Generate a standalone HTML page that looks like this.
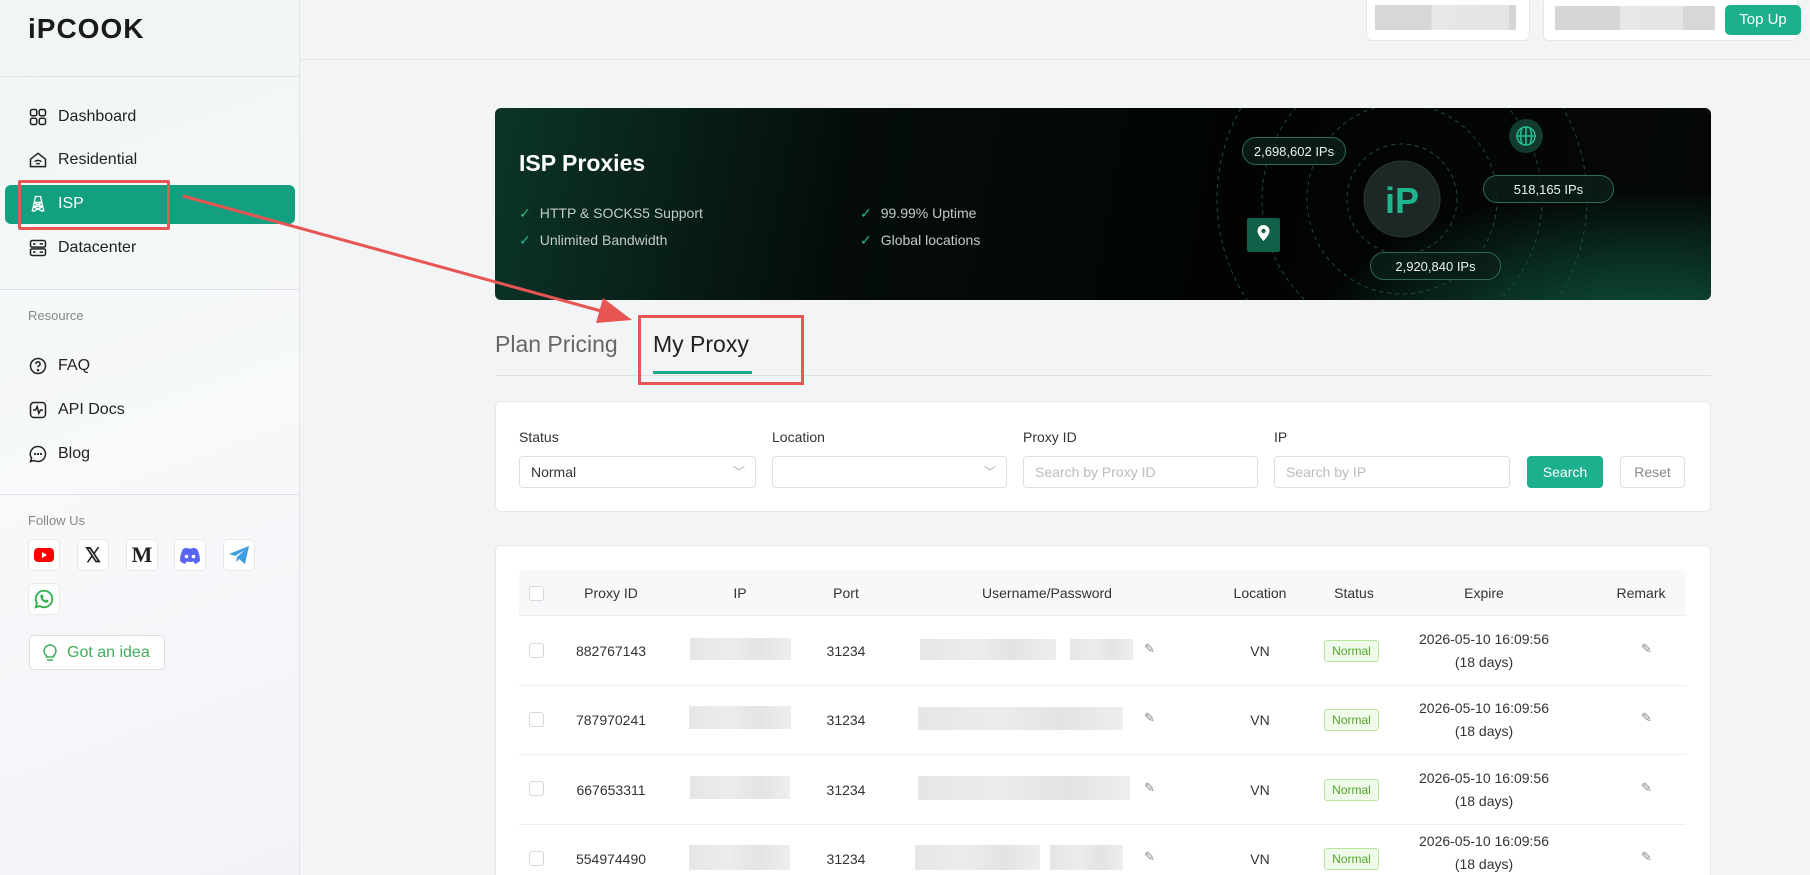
<!DOCTYPE html>
<html style="overflow:hidden;width:1810px;height:875px"><head><meta charset="utf-8"><style>
*{box-sizing:border-box;margin:0;padding:0}
body{width:1810px;height:875px;overflow:hidden;background:#f3f4f6;font-family:"Liberation Sans",sans-serif;color:#222;position:relative}
.abs{position:absolute}
.side{left:0;top:0;width:300px;height:875px;background:linear-gradient(160deg,#f0f6f4,#f7f9fa 50%,#f1f3f8);border-right:1px solid #e3e5e8}
.hr{position:absolute;left:0;width:300px;height:1px;background:#dfe2e6}
.nav{position:absolute;left:28px;font-size:16px;color:#222;display:flex;align-items:center;gap:10px}
.nav svg{width:20px;height:20px}
.soc{position:absolute;width:32px;height:32px;background:#fff;border:1px solid #e6e8ea;border-radius:5px;display:flex;align-items:center;justify-content:center}
.card{background:#fff;border:1px solid #e5e7ea;border-radius:6px}
.lbl{position:absolute;top:429px;font-size:14px;color:#333}
.inp{position:absolute;top:456px;height:32px;border:1px solid #dcdfe3;border-radius:4px;background:#fff;font-size:14px;padding:0 11px;line-height:30px;color:#bbb}
.th{position:absolute;top:585px;font-size:14px;color:#333;transform:translateX(-50%);white-space:nowrap}
.td{position:absolute;font-size:14px;color:#333;transform:translate(-50%,-50%);white-space:nowrap;text-align:center}
.blur{position:absolute;background:linear-gradient(90deg,#e6e6e6,#ececec 40%,#e3e3e3 70%,#eee)}
.cb{position:absolute;width:15px;height:15px;border:1px solid #d5d8dc;border-radius:3px;background:#fff;left:529px}
.badge{position:absolute;left:1324px;width:55px;height:22px;border:1px solid #b7e49a;background:#f0faea;color:#52a52a;font-size:12px;text-align:center;line-height:20px;border-radius:3px}
.rowline{position:absolute;left:519px;width:1167px;height:1px;background:#ebedf0}
.pill{position:absolute;border:1px solid #2e6a55;background:rgba(10,30,24,.85);border-radius:14px;color:#e8f3ef;font-size:13px;display:flex;align-items:center;justify-content:center}
.feat{position:absolute;color:#c4ccca;font-size:14px}
.feat b{color:#2ab48e;margin-right:9px;font-weight:normal}
.pen{position:absolute;color:#888;font-size:13px}
</style></head><body>

<div class="abs side">
  <div class="abs" style="left:28px;top:13px;font-size:28px;font-weight:bold;letter-spacing:1px;color:#1b1b1b">iPCOOK</div>
  <div class="hr" style="top:76px"></div>
  <div class="nav" style="top:107px"><svg viewBox="0 0 24 24" fill="none" stroke="#222" stroke-width="1.8"><rect x="3" y="3" width="7.5" height="7.5" rx="2"/><rect x="13.5" y="3" width="7.5" height="7.5" rx="2"/><rect x="3" y="13.5" width="7.5" height="7.5" rx="2"/><rect x="13.5" y="13.5" width="7.5" height="7.5" rx="2"/></svg>Dashboard</div>
  <div class="nav" style="top:150px"><svg viewBox="0 0 24 24" fill="none" stroke="#222" stroke-width="1.8"><path d="M3 11l9-7 9 7v9H3z"/><path d="M8 14a6 6 0 0 1 8 0M10 17a3 3 0 0 1 4 0"/></svg>Residential</div>
  <div class="abs" style="left:5px;top:185px;width:290px;height:39px;background:#12a080;border-radius:6px"></div>
  <div class="nav" style="top:194px;color:#fff"><svg viewBox="0 0 24 24" fill="none" stroke="#fff" stroke-width="1.6"><path d="M8 3h8M9 3l-4 18M15 3l4 18M7 10h10M6 15h12M7 10l10 5M17 10L7 15M6 15l12 6M18 15L6 21"/></svg>ISP</div>
  <div class="abs" style="left:18px;top:180px;width:152px;height:50px;border:3px solid #e85555;border-radius:2px"></div>
  <div class="nav" style="top:238px"><svg viewBox="0 0 24 24" fill="none" stroke="#222" stroke-width="1.8"><rect x="3" y="3" width="18" height="8" rx="2"/><rect x="3" y="13" width="18" height="8" rx="2"/><path d="M6 7h3M6 17h3M14 7h4M14 17h4"/></svg>Datacenter</div>
  <div class="hr" style="top:289px"></div>
  <div class="abs" style="left:28px;top:308px;font-size:13px;color:#888">Resource</div>
  <div class="nav" style="top:356px"><svg viewBox="0 0 24 24" fill="none" stroke="#222" stroke-width="1.8"><circle cx="12" cy="12" r="9"/><path d="M9.5 9.5a2.5 2.5 0 1 1 3.5 2.3c-.7.3-1 .9-1 1.7"/><circle cx="12" cy="17" r=".6" fill="#222"/></svg>FAQ</div>
  <div class="nav" style="top:400px"><svg viewBox="0 0 24 24" fill="none" stroke="#222" stroke-width="1.8"><rect x="3" y="3" width="18" height="18" rx="4"/><path d="M6 12h3l2-4 2 8 2-4h3"/></svg>API Docs</div>
  <div class="nav" style="top:444px"><svg viewBox="0 0 24 24" fill="none" stroke="#222" stroke-width="1.8"><path d="M12 3a9 9 0 1 1-4.5 16.8L3 21l1.3-4A9 9 0 0 1 12 3z"/><circle cx="8.5" cy="12" r=".5" fill="#222"/><circle cx="12" cy="12" r=".5" fill="#222"/><circle cx="15.5" cy="12" r=".5" fill="#222"/></svg>Blog</div>
  <div class="hr" style="top:494px"></div>
  <div class="abs" style="left:28px;top:513px;font-size:13px;color:#888">Follow Us</div>
  <div class="soc" style="left:28px;top:539px"><svg width="20" height="14" viewBox="0 0 20 14"><rect width="20" height="14" rx="4" fill="#f00"/><path d="M8 4l5 3-5 3z" fill="#fff"/></svg></div>
  <div class="soc" style="left:77px;top:539px;font-size:20px;font-weight:bold;font-family:'Liberation Serif',serif">𝕏</div>
  <div class="soc" style="left:126px;top:539px;font-size:22px;font-weight:bold;font-family:'Liberation Serif',serif">M</div>
  <div class="soc" style="left:174px;top:539px"><svg width="22" height="17" viewBox="0 0 22 17"><path d="M4 2Q8 0 9 1.5h4Q14 0 18 2q3 5 3 12-2 2-5 3l-1.5-2.5Q12 15 11 15t-3.5-.5L6 17q-3-1-5-3 0-7 3-12z" fill="#5865f2"/><circle cx="7.5" cy="9.5" r="1.8" fill="#fff"/><circle cx="14.5" cy="9.5" r="1.8" fill="#fff"/></svg></div>
  <div class="soc" style="left:223px;top:539px"><svg width="22" height="20" viewBox="0 0 22 20"><path d="M1 9L21 1l-4 18-6-5-3 3 1-5 8-7-10 6z" fill="#3d9ee0"/></svg></div>
  <div class="soc" style="left:28px;top:583px"><svg width="22" height="22" viewBox="0 0 24 24" fill="none" stroke="#2fb04b" stroke-width="2"><path d="M12 3a9 9 0 1 1-4.6 16.7L3 21l1.3-4.3A9 9 0 0 1 12 3z"/><path d="M8.5 8.5c0 4 3 7 7 7l1-1.5-2-1-1 1c-1.5-.5-3-2-3.5-3.5l1-1-1-2z" fill="#2fb04b" stroke-width="1"/></svg></div>
  <div class="abs" style="left:29px;top:635px;width:136px;height:35px;border:1px solid #dcdfe2;border-radius:5px;background:#fff;color:#3fad5c;font-size:16px;display:flex;align-items:center;padding-left:12px;gap:9px"><svg width="16" height="18" viewBox="0 0 16 18" fill="none" stroke="#3fad5c" stroke-width="1.6"><path d="M8 1a6 6 0 0 1 3.5 10.8V13h-7v-1.2A6 6 0 0 1 8 1zM5 16h6"/></svg>Got an idea</div>
</div>

<div class="abs" style="left:300px;top:59px;width:1510px;height:1px;background:#e2e4e7"></div>
<div class="abs card" style="left:1366px;top:-4px;width:164px;height:45px;border-radius:6px"></div>
<div class="blur" style="left:1375px;top:5px;width:141px;height:25px;background:linear-gradient(90deg,#d6d8d8 40%,#e6e8e6 40%,#e4e6e4 95%,#d4d6d6 95%)"></div>
<div class="abs card" style="left:1543px;top:-4px;width:255px;height:45px"></div>
<div class="blur" style="left:1555px;top:6px;width:160px;height:24px;background:linear-gradient(90deg,#d4d6d6 40%,#e6e8e6 41%,#e4e6e4 80%,#d6d8d8 80%)"></div>
<div class="abs" style="left:1725px;top:5px;width:76px;height:30px;background:#1cb08e;border-radius:5px;color:#fff;font-size:15px;text-align:center;line-height:30px">Top Up</div>

<div class="abs" style="left:495px;top:108px;width:1216px;height:192px;border-radius:6px;overflow:hidden;background:radial-gradient(ellipse 420px 200px at 1150px 240px,#0f5a43 0%,#0a2e24 45%,transparent 80%),linear-gradient(100deg,#0c3528 0%,#050d0b 28%,#020404 60%,#050807 100%)">
  <svg class="abs" style="left:0;top:0" width="1216" height="192">
    <g fill="none" stroke="#1f4a3c" stroke-dasharray="4 4">
      <circle cx="907" cy="91" r="55"/><circle cx="907" cy="91" r="95"/><circle cx="907" cy="91" r="140"/><circle cx="907" cy="91" r="185"/>
    </g>
    <circle cx="907" cy="91" r="38" fill="#1d2826" stroke="#2a3a35"/>
    <text x="890" y="105" font-family="Liberation Sans" font-weight="bold" font-size="36" fill="#1fb58e">iP</text>
    <circle cx="1031" cy="28" r="17" fill="#123a2e"/>
    <g fill="none" stroke="#28c193" stroke-width="1.5"><circle cx="1031" cy="28" r="9"/><path d="M1022 28h18M1031 19v18M1027 20q-3 8 0 16M1035 20q3 8 0 16"/></g>
    <rect x="752" y="110" width="33" height="34" rx="2" fill="#11604a"/>
    <path d="M768.5 117a6 6 0 0 1 6 6c0 4-6 10-6 10s-6-6-6-10a6 6 0 0 1 6-6z" fill="#fff"/><circle cx="768.5" cy="123" r="2.2" fill="#11604a"/>
  </svg>
  <div class="abs" style="left:24px;top:42px;color:#fff;font-size:23px;font-weight:bold">ISP Proxies</div>
  <div class="feat" style="left:24px;top:97px"><b>✓</b>HTTP &amp; SOCKS5 Support</div>
  <div class="feat" style="left:24px;top:124px"><b>✓</b>Unlimited Bandwidth</div>
  <div class="feat" style="left:365px;top:97px"><b>✓</b>99.99% Uptime</div>
  <div class="feat" style="left:365px;top:124px"><b>✓</b>Global locations</div>
  <div class="pill" style="left:747px;top:29px;width:104px;height:28px">2,698,602 IPs</div>
  <div class="pill" style="left:988px;top:67px;width:131px;height:28px">518,165 IPs</div>
  <div class="pill" style="left:875px;top:144px;width:131px;height:28px">2,920,840 IPs</div>
</div>

<div class="abs" style="left:495px;top:331px;font-size:23px;color:#666">Plan Pricing</div>
<div class="abs" style="left:653px;top:331px;font-size:23px;color:#222">My Proxy</div>
<div class="abs" style="left:653px;top:371px;width:99px;height:3px;background:#1ea888"></div>
<div class="abs" style="left:495px;top:375px;width:1216px;height:1px;background:#dcdfe2"></div>
<div class="abs" style="left:638px;top:315px;width:166px;height:70px;border:3px solid #e85555"></div>

<div class="abs card" style="left:495px;top:401px;width:1216px;height:111px"></div>
<div class="lbl" style="left:519px">Status</div>
<div class="lbl" style="left:772px">Location</div>
<div class="lbl" style="left:1023px">Proxy ID</div>
<div class="lbl" style="left:1274px">IP</div>
<div class="inp" style="left:519px;width:237px;color:#333">Normal<span style="position:absolute;right:10px;color:#aaa;font-size:12px">﹀</span></div>
<div class="inp" style="left:772px;width:235px"><span style="position:absolute;right:10px;color:#aaa;font-size:12px">﹀</span></div>
<div class="inp" style="left:1023px;width:235px">Search by Proxy ID</div>
<div class="inp" style="left:1274px;width:236px">Search by IP</div>
<div class="abs" style="left:1527px;top:456px;width:76px;height:32px;background:#1cb08e;border-radius:4px;color:#fff;font-size:14px;text-align:center;line-height:32px">Search</div>
<div class="abs" style="left:1620px;top:456px;width:65px;height:32px;border:1px solid #dcdfe3;background:#fff;border-radius:4px;color:#888;font-size:14px;text-align:center;line-height:30px">Reset</div>

<div class="abs card" style="left:495px;top:545px;width:1216px;height:340px;border-bottom:none"></div>
<div class="abs" style="left:519px;top:570px;width:1167px;height:46px;background:#f7f8f9;border-bottom:1px solid #ebedf0;border-radius:6px 6px 0 0"></div>
<div class="cb" style="top:586px"></div>
<div class="th" style="left:611px">Proxy ID</div>
<div class="th" style="left:740px">IP</div>
<div class="th" style="left:846px">Port</div>
<div class="th" style="left:1047px">Username/Password</div>
<div class="th" style="left:1260px">Location</div>
<div class="th" style="left:1354px">Status</div>
<div class="th" style="left:1484px">Expire</div>
<div class="th" style="left:1641px">Remark</div>

<div class="rowline" style="top:685px"></div>
<div class="rowline" style="top:754px"></div>
<div class="rowline" style="top:824px"></div>

<div class="cb" style="top:643px"></div><div class="td" style="left:611px;top:651px">882767143</div>
<div class="blur" style="left:690px;top:638px;width:101px;height:22px"></div><div class="td" style="left:846px;top:651px">31234</div>
<div class="blur" style="left:920px;top:639px;width:136px;height:21px"></div><div class="blur" style="left:1070px;top:639px;width:63px;height:21px"></div>
<div class="pen" style="left:1144px;top:641px">✎</div><div class="td" style="left:1260px;top:651px">VN</div>
<div class="badge" style="top:640px">Normal</div><div class="td" style="left:1484px;top:651px;line-height:23px">2026-05-10 16:09:56<br>(18 days)</div><div class="pen" style="left:1641px;top:641px">✎</div>

<div class="cb" style="top:712px"></div><div class="td" style="left:611px;top:720px">787970241</div>
<div class="blur" style="left:689px;top:706px;width:102px;height:23px"></div><div class="td" style="left:846px;top:720px">31234</div>
<div class="blur" style="left:918px;top:707px;width:205px;height:23px"></div>
<div class="pen" style="left:1144px;top:710px">✎</div><div class="td" style="left:1260px;top:720px">VN</div>
<div class="badge" style="top:709px">Normal</div><div class="td" style="left:1484px;top:720px;line-height:23px">2026-05-10 16:09:56<br>(18 days)</div><div class="pen" style="left:1641px;top:710px">✎</div>

<div class="cb" style="top:781px"></div><div class="td" style="left:611px;top:790px">667653311</div>
<div class="blur" style="left:690px;top:776px;width:100px;height:23px"></div><div class="td" style="left:846px;top:790px">31234</div>
<div class="blur" style="left:918px;top:776px;width:212px;height:24px"></div>
<div class="pen" style="left:1144px;top:780px">✎</div><div class="td" style="left:1260px;top:790px">VN</div>
<div class="badge" style="top:779px">Normal</div><div class="td" style="left:1484px;top:790px;line-height:23px">2026-05-10 16:09:56<br>(18 days)</div><div class="pen" style="left:1641px;top:780px">✎</div>

<div class="cb" style="top:851px"></div><div class="td" style="left:611px;top:859px">554974490</div>
<div class="blur" style="left:689px;top:845px;width:101px;height:25px"></div><div class="td" style="left:846px;top:859px">31234</div>
<div class="blur" style="left:915px;top:845px;width:125px;height:25px"></div><div class="blur" style="left:1050px;top:845px;width:73px;height:25px"></div>
<div class="pen" style="left:1144px;top:849px">✎</div><div class="td" style="left:1260px;top:859px">VN</div>
<div class="badge" style="top:848px">Normal</div><div class="td" style="left:1484px;top:853px;line-height:23px">2026-05-10 16:09:56<br>(18 days)</div><div class="pen" style="left:1641px;top:849px">✎</div>

<svg class="abs" style="left:0;top:0;pointer-events:none" width="1810" height="875">
  <line x1="183" y1="196" x2="612" y2="314" stroke="#e85555" stroke-width="3"/>
  <path d="M632 320L603 298L596 323z" fill="#e85555"/>
</svg>
</body></html>
